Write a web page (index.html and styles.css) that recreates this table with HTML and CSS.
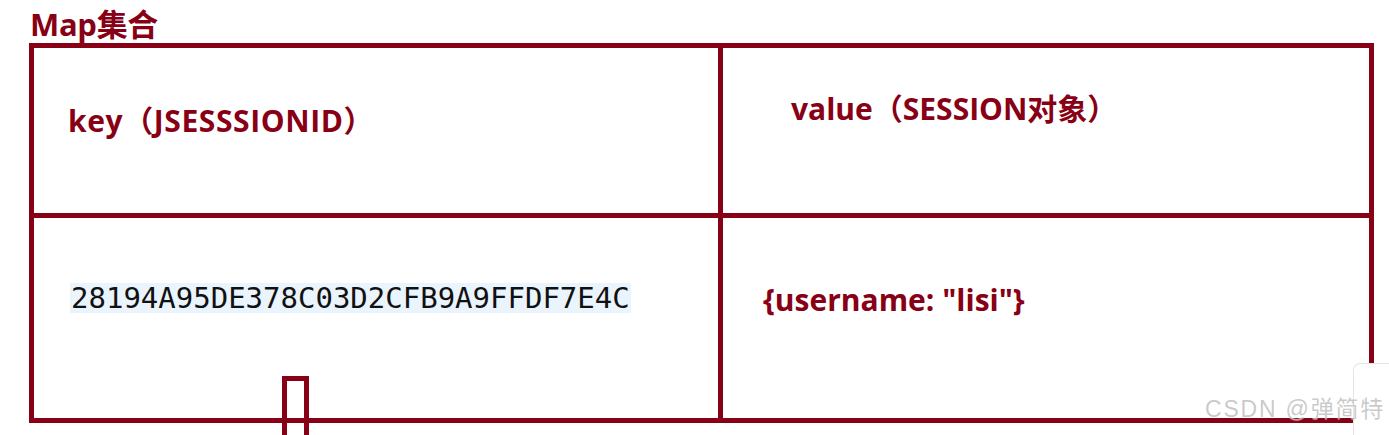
FILE: index.html
```html
<!DOCTYPE html>
<html lang="zh">
<head>
<meta charset="utf-8">
<title>Map集合</title>
<link rel="stylesheet" href="styles.css">
</head>
<body>
<div class="page">
  <div class="title">Map集合</div>
  <div class="map-table">
    <div class="cell cell-key"><span class="label label-key">key（JSESSSIONID）</span></div>
    <div class="cell cell-value"><span class="label">value（SESSION对象）</span></div>
    <div class="cell cell-id"><span class="session-id">28194A95DE378C03D2CFB9A9FFDF7E4C</span></div>
    <div class="cell cell-obj"><span class="label">{username: "lisi"}</span></div>
  </div>
  <div class="pi-mark"></div>
  <div class="side-widget"></div>
  <div class="watermark">CSDN @弹简特</div>
</div>
</body>
</html>
```

FILE: styles.css
```css
html, body {
  margin: 0;
  padding: 0;
  background: #ffffff;
}

body {
  width: 1389px;
  height: 435px;
  overflow: hidden;
  font-family: "Open Sans", "Noto Sans CJK SC", sans-serif;
}

.page {
  position: relative;
  width: 1389px;
  height: 435px;
  overflow: hidden;
}

.title {
  height: 43px;
  box-sizing: border-box;
  padding: 6px 0 0 30px;
  line-height: 36px;
  font-size: 31px;
  font-weight: 700;
  color: #880015;
  letter-spacing: -0.3px;
}

.map-table {
  margin-left: 29px;
  width: 1345px;
  box-sizing: border-box;
  padding: 5px;
  background: #880015;
  display: grid;
  grid-template-columns: 684px 646px;
  grid-template-rows: 165px 200px;
  gap: 5px;
}

.cell {
  background: #ffffff;
  box-sizing: border-box;
}

.label {
  font-size: 30px;
  font-weight: 700;
  color: #880015;
  line-height: 30px;
  white-space: nowrap;
}

.label-key {
  letter-spacing: 0.6px;
}

.cell-key {
  padding: 58px 0 0 34px;
}

.cell-value {
  padding: 46px 0 0 68px;
}

.cell-id {
  padding: 65px 0 0 36px;
}

.cell-obj {
  padding: 67px 0 0 40px;
}

.session-id {
  display: inline-block;
  background: #eaf4fd;
  font-family: "DejaVu Sans Mono", monospace;
  font-size: 29px;
  line-height: 30px;
  padding: 0 1px;
  color: #111111;
}

.pi-mark {
  position: absolute;
  left: 282px;
  top: 376px;
  width: 17px;
  height: 54px;
  border: 5px solid #880015;
  border-bottom: none;
}

.side-widget {
  position: absolute;
  left: 1353px;
  top: 363px;
  width: 35px;
  height: 71px;
  background: #ffffff;
  border: 1px solid #e4e4e4;
  border-right: none;
  border-bottom: none;
  border-radius: 7px 0 0 0;
}

.watermark {
  position: absolute;
  left: 1205px;
  top: 395px;
  font-family: "Liberation Sans", "Noto Sans CJK SC", sans-serif;
  font-size: 23px;
  letter-spacing: 1.8px;
  line-height: 28px;
  color: rgba(150, 150, 150, 0.5);
  text-shadow: 0 0 1px rgba(255, 255, 255, 0.8);
  white-space: nowrap;
}
```
